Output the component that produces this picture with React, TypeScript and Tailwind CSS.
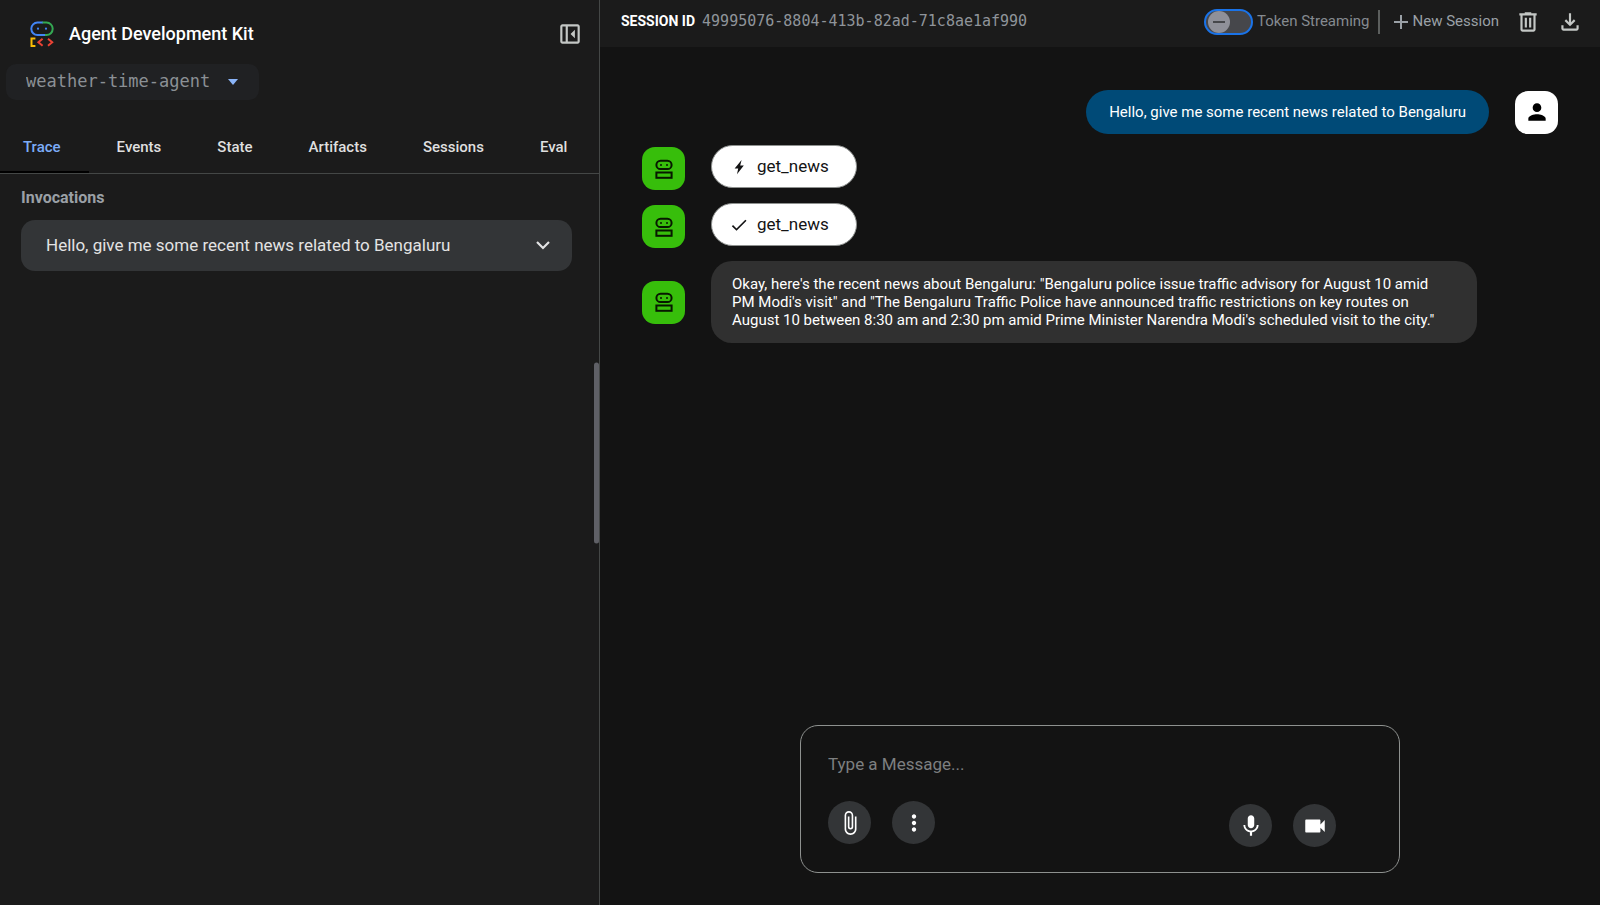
import { useState } from 'react'
import type { ReactNode } from 'react'
import { MdAdd, MdAttachFile, MdCheck, MdMic, MdMoreVert, MdPerson, MdVideocam } from 'react-icons/md'

const TABS = ['Trace', 'Events', 'State', 'Artifacts', 'Sessions', 'Eval']

const PROMPT = 'Hello, give me some recent news related to Bengaluru'

const REPLY =
  'Okay, here\'s the recent news about Bengaluru: "Bengaluru police issue traffic advisory for August 10 amid PM Modi\'s visit" and "The Bengaluru Traffic Police have announced traffic restrictions on key routes on August 10 between 8:30 am and 2:30 pm amid Prime Minister Narendra Modi\'s scheduled visit to the city."'

function Logo() {
  return (
    <svg viewBox="0 0 24 26" className="h-[26px] w-6" fill="none" strokeWidth="2">
      <path d="M15 14H7.5a6.2 6.2 0 0 1 0-12.4H13" stroke="#4285f4" />
      <path d="M12.5 1.6h4a6.2 6.2 0 0 1 0 12.4H15" stroke="#34a853" />
      <circle cx="8" cy="7.7" r="1.1" fill="#4285f4" />
      <circle cx="16" cy="7.7" r="1.1" fill="#4285f4" />
      <path d="M5.4 17.4H1.5v7.7h3.9" stroke="#fbbc04" />
      <path d="M12.6 17.8 8.4 21.3l4.2 3.5M18 17.8l4.2 3.5-4.2 3.5" stroke="#ea4335" />
    </svg>
  )
}

function PanelCloseIcon() {
  return (
    <svg viewBox="0 -960 960 960" className="h-[26px] w-[26px]" fill="currentColor">
      <path d="M660-320v-320L500-480l160 160ZM200-120q-33 0-56.5-23.5T120-200v-560q0-33 23.5-56.5T200-840h560q33 0 56.5 23.5T840-760v560q0 33-23.5 56.5T760-120H200Zm120-80v-560H200v560h120Zm80 0h360v-560H400v560Z" />
    </svg>
  )
}

function DeleteIcon() {
  return (
    <svg viewBox="0 -960 960 960" className="h-[26px] w-[26px]" fill="currentColor">
      <path d="M280-120q-33 0-56.5-23.5T200-200v-520h-40v-80h200v-40h240v40h200v80h-40v520q0 33-23.5 56.5T680-120H280Zm400-600H280v520h400v-520ZM360-280h80v-360h-80v360Zm160 0h80v-360h-80v360Z" />
    </svg>
  )
}

function DownloadIcon() {
  return (
    <svg viewBox="0 -960 960 960" className="h-[26px] w-[26px]" fill="currentColor">
      <path d="M480-320 280-520l56-58 104 104v-326h80v326l104-104 56 58-200 200ZM240-160q-33 0-56.5-23.5T160-240v-120h80v120h480v-120h80v120q0 33-23.5 56.5T720-160H240Z" />
    </svg>
  )
}

function BoltIcon() {
  return (
    <svg viewBox="0 0 20 20" className="h-5 w-5" fill="currentColor">
      <path d="M12.6 3 5.6 11.6h3.6L8 17.2l6.8-8.6h-3.6z" />
    </svg>
  )
}

function BotAvatar() {
  return (
    <div className="flex h-[43px] w-[43px] shrink-0 items-center justify-center rounded-[13px] bg-[#37be0b] text-[#071800]">
      <svg viewBox="0 0 24 24" className="h-6 w-6" fill="none" stroke="currentColor" strokeWidth="2">
        <rect x="4.4" y="3.7" width="15.2" height="8.4" rx="4.2" />
        <rect x="4.4" y="15.5" width="15.2" height="5.3" />
        <circle cx="9" cy="7.9" r="1" fill="currentColor" stroke="none" />
        <circle cx="15" cy="7.9" r="1" fill="currentColor" stroke="none" />
      </svg>
    </div>
  )
}

function ToolCall({ icon, name }: { icon: ReactNode; name: string }) {
  return (
    <div className="flex items-start gap-[26px]">
      <div className="pt-[2px]">
        <BotAvatar />
      </div>
      <button
        type="button"
        className="flex h-[43px] items-center gap-2 rounded-full border border-[#8e918f] bg-white pr-[27px] pl-[17px] text-[17px] text-[#131314]"
      >
        {icon}
        {name}
      </button>
    </div>
  )
}

function RoundButton({ label, children }: { label: string; children: ReactNode }) {
  return (
    <button
      type="button"
      aria-label={label}
      className="flex h-[43px] w-[43px] items-center justify-center rounded-full bg-[#333537] text-white"
    >
      {children}
    </button>
  )
}

function Sidebar() {
  const [active, setActive] = useState('Trace')

  return (
    <aside className="relative w-[37.5%] shrink-0 border-r border-[#444746] bg-[#1b1b1b]">
      <div className="flex items-center pt-5 pr-4 pl-[30px]">
        <Logo />
        <h1 className="ml-[15px] text-[18px] leading-7 font-medium text-white">Agent Development Kit</h1>
        <button type="button" aria-label="Close panel" className="ml-auto text-[#c4c7c5]">
          <PanelCloseIcon />
        </button>
      </div>

      <div className="relative mt-4 ml-[6px] w-[253px]">
        <select
          aria-label="Agent"
          className="h-9 w-full appearance-none rounded-[10px] bg-[#202123] pl-5 font-['DejaVu_Sans_Mono',monospace] text-[17px] text-[#8b9095]"
        >
          <option>weather-time-agent</option>
        </select>
        <svg viewBox="0 0 10 6" className="pointer-events-none absolute top-[15px] right-[21px] h-[6px] w-[10px]">
          <path d="M0 0h10L5 6z" fill="#8ab4f8" />
        </svg>
      </div>

      <div role="tablist" className="mt-5 flex h-[54px] overflow-hidden border-b border-[#444746]">
        {TABS.map(tab => (
          <button
            key={tab}
            type="button"
            role="tab"
            aria-selected={active === tab}
            onClick={() => setActive(tab)}
            className={
              active === tab
                ? 'border-b-2 border-black px-7 pt-1 text-[15px] font-medium text-[#7cacf8] first:pl-[23px]'
                : 'border-b-2 border-transparent px-7 pt-1 text-[15px] font-medium text-[#dfdfdf] first:pl-[23px]'
            }
          >
            {tab}
          </button>
        ))}
      </div>

      <div className="pr-[27px] pl-[21px]">
        <h2 className="mt-3 text-[16px] leading-6 font-bold text-[#9aa0a6]">Invocations</h2>
        <button
          type="button"
          className="mt-[10px] flex h-[51px] w-full items-center justify-between rounded-[14px] bg-[#333537] pr-[22px] pl-[25px] text-[17px] text-[#e3e3e3]"
        >
          {PROMPT}
          <svg viewBox="0 0 14 9" className="h-[9px] w-[14px]" fill="none" stroke="currentColor" strokeWidth="2.2">
            <path d="m1 1 6 6 6-6" />
          </svg>
        </button>
      </div>

      <div className="absolute top-1/2 right-0 h-1/5 w-[5px] -translate-y-1/2 rounded-sm bg-[#5f6066]" />
    </aside>
  )
}

function Toolbar() {
  const [streaming, setStreaming] = useState(false)

  return (
    <header className="flex h-[47px] items-center bg-[#1b1b1b] pr-[17px] pb-1 pl-[21px] text-[#9aa0a6]">
      <div className="flex items-baseline gap-[7px]">
        <span className="text-[14px] font-bold text-white">SESSION ID</span>
        <span className="font-['DejaVu_Sans_Mono',monospace] text-[15px] text-[#8f949a]">
          49995076-8804-413b-82ad-71c8ae1af990
        </span>
      </div>

      <label className="ml-auto flex items-center gap-1 text-[15px] text-[#858a90]">
        <span className="relative flex h-[26px] w-[49px] items-center rounded-full border-2 border-[#1a73e8] bg-[#46474b] px-[2px]">
          <input
            type="checkbox"
            role="switch"
            checked={streaming}
            onChange={e => setStreaming(e.target.checked)}
            className="peer absolute inset-0 appearance-none"
          />
          <span className="flex h-[22px] w-[22px] items-center justify-center rounded-full bg-[#8f9099] peer-checked:ml-auto">
            <span className="h-[2px] w-3 bg-[#46474b]" />
          </span>
        </span>
        Token Streaming
      </label>
      <div className="ml-2 h-6 w-[2px] bg-[#5c5f5e]" />
      <button type="button" className="ml-[9px] flex items-center text-[15px]">
        <MdAdd className="h-6 w-6" />
        New Session
      </button>
      <button type="button" aria-label="Delete session" className="ml-4 text-[#c4c7c5]">
        <DeleteIcon />
      </button>
      <button type="button" aria-label="Export session" className="ml-4 text-[#c4c7c5]">
        <DownloadIcon />
      </button>
    </header>
  )
}

function Composer() {
  const [message, setMessage] = useState('')

  return (
    <form
      onSubmit={e => e.preventDefault()}
      className="mx-auto mb-8 flex w-3/5 flex-col rounded-[18px] border border-[#8e918f] px-[27px] pt-[26px] pb-[25px]"
    >
      <textarea
        aria-label="Message"
        value={message}
        onChange={e => setMessage(e.target.value)}
        rows={1}
        placeholder="Type a Message..."
        className="h-6 resize-none text-[17px] leading-6 text-white outline-none placeholder:text-[#7d7f80]"
      />
      <div className="mt-[25px] flex justify-between pr-9">
        <div className="flex gap-[21px]">
          <RoundButton label="Attach file">
            <MdAttachFile className="h-[26px] w-[26px]" />
          </RoundButton>
          <RoundButton label="More options">
            <MdMoreVert className="h-[26px] w-[26px]" />
          </RoundButton>
        </div>
        <div className="flex gap-[21px] pt-[3px]">
          <RoundButton label="Use microphone">
            <MdMic className="h-[26px] w-[26px]" />
          </RoundButton>
          <RoundButton label="Use camera">
            <MdVideocam className="h-[26px] w-[26px]" />
          </RoundButton>
        </div>
      </div>
    </form>
  )
}

export default function App() {
  return (
    <div className="flex min-h-screen bg-[#131313] font-[Roboto,sans-serif]">
      <Sidebar />
      <main className="flex min-w-0 flex-1 flex-col">
        <Toolbar />
        <div className="flex flex-1 flex-col px-[42px] pt-[43px]">
          <div className="flex items-center justify-end gap-[26px]">
            <p className="rounded-full bg-[#004a77] px-[23px] py-3 text-[15px] leading-5 text-white">{PROMPT}</p>
            <div className="flex h-[43px] w-[43px] items-center justify-center rounded-[13px] bg-white text-black">
              <MdPerson className="h-[26px] w-[26px]" />
            </div>
          </div>
          <div className="mt-[11px] flex flex-col gap-[13px]">
            <ToolCall icon={<BoltIcon />} name="get_news" />
            <ToolCall icon={<MdCheck className="h-5 w-5" />} name="get_news" />
            <div className="flex items-center gap-[26px]">
              <BotAvatar />
              <p className="max-w-[766px] rounded-[21px] bg-[#303030] py-[14px] pr-[30px] pl-[21px] text-[15px] leading-[18px] text-white">
                {REPLY}
              </p>
            </div>
          </div>
        </div>
        <Composer />
      </main>
    </div>
  )
}
